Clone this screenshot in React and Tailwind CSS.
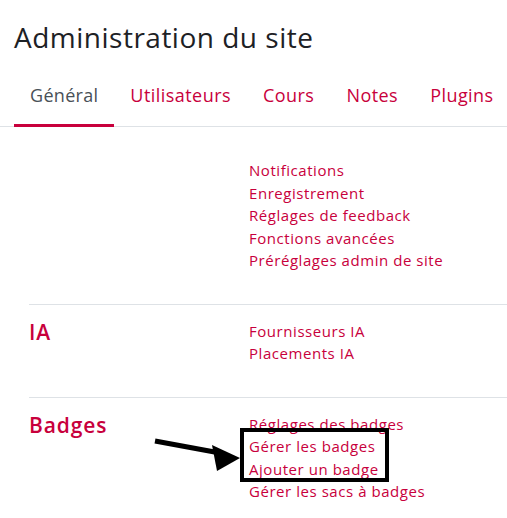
export default function App() {
  const link = "block text-[15px] leading-[22.5px] tracking-[0.55px] text-[#c8003c]";
  const tab = "px-4 pb-[17px] text-[18px] leading-[27px] tracking-[0.45px] text-[#c8003c]";
  return (
    <div className="relative w-[507px] h-[518px] overflow-hidden bg-white" style={{ fontFamily: '"Open Sans", sans-serif' }}>
      <h2 className="pl-[14px] pt-[20px] text-[28px] leading-[34px] tracking-[0.5px] text-[#1d2125] font-normal">Administration du site</h2>
      <nav className="mt-[28px] flex border-b border-[#dee2e6] pl-[14px]">
        <div className="px-4 pb-[14px] text-[18px] leading-[27px] tracking-[0.3px] text-[#495057] border-b-[3px] border-[#c8003c] -mb-px">Général</div>
        <div className={tab}>Utilisateurs</div>
        <div className={tab}>Cours</div>
        <div className={tab}>Notes</div>
        <div className={tab}>Plugins</div>
      </nav>
      <div className="pl-[29px] pt-[32px]">
        <div className="flex pb-[32px]">
          <div className="w-[220px]"></div>
          <div>
            <a className={link}>Notifications</a>
            <a className={link}>Enregistrement</a>
            <a className={link}>Réglages de feedback</a>
            <a className={link}>Fonctions avancées</a>
            <a className={link}>Préréglages admin de site</a>
          </div>
        </div>
        <div className="flex border-t border-[#dee2e6] pt-[15px] pb-[32px]">
          <div className="w-[220px] text-[21px] leading-[25px] tracking-[0.9px] font-semibold text-[#c8003c]">IA</div>
          <div>
            <a className={link}>Fournisseurs IA</a>
            <a className={link}>Placements IA</a>
          </div>
        </div>
        <div className="flex border-t border-[#dee2e6] pt-[15px] pb-[32px]">
          <div className="w-[220px] text-[21px] leading-[25px] tracking-[0.9px] font-semibold text-[#c8003c]">Badges</div>
          <div>
            <a className={link}>Réglages des badges</a>
            <div className="relative">
              <a className={link}>Gérer les badges</a>
              <a className={link}>Ajouter un badge</a>
              <div className="absolute left-[-9px] top-[-7px] w-[149px] h-[54px] border-4 border-black"></div>
            </div>
            <a className={link}>Gérer les sacs à badges</a>
          </div>
        </div>
      </div>
      <svg className="absolute left-0 top-0" width="507" height="518" viewBox="0 0 507 518">
        <line x1="155" y1="441" x2="220" y2="453" stroke="black" strokeWidth="5" />
        <polygon points="240,458 212,445 217,471" fill="black" />
      </svg>
    </div>
  );
}
